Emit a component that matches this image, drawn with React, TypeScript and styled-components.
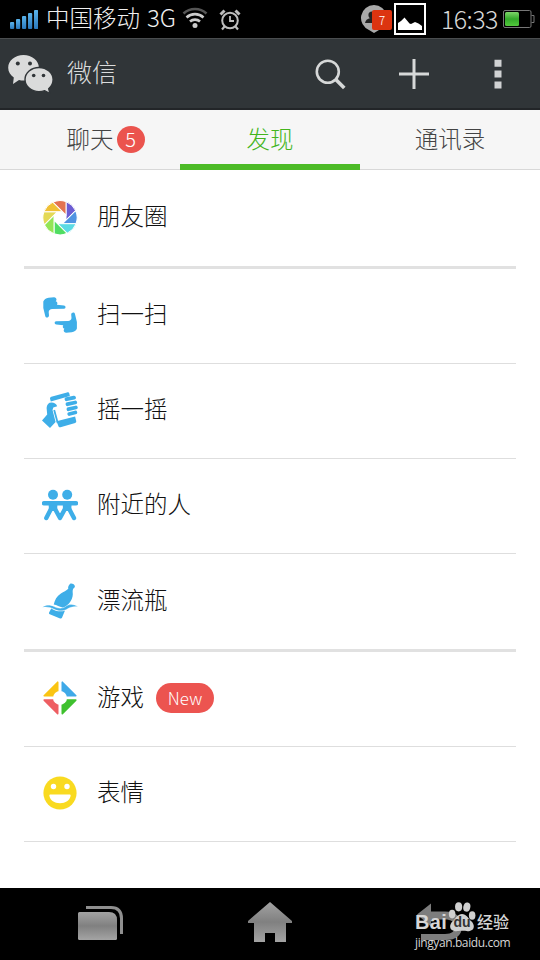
import type { ReactNode } from "react"
import styled, { createGlobalStyle } from "styled-components"

const BLUE = "#3eaee8"

export default function App() {
  return (
    <>
      <GlobalStyle />
      <Screen>
        <StatusBar />
        <Header />
        <Tabs />
        <List>
          <Item icon={<MomentsIcon />} label="朋友圈" thick height={96} />
          <Item icon={<ScanIcon />} label="扫一扫" />
          <Item icon={<ShakeIcon />} label="摇一摇" />
          <Item icon={<PeopleIcon />} label="附近的人" />
          <Item icon={<BottleIcon />} label="漂流瓶" thick height={95} />
          <Item icon={<GamesIcon />} label="游戏" tag="New" />
          <Item icon={<StickerIcon />} label="表情" />
        </List>
        <NavBar />
      </Screen>
    </>
  )
}

const StatusBar = () => (
  <Status>
    <svg width="28" height="19" viewBox="0 0 28 19">
      <defs>
        <linearGradient id="signal" x1="0" y1="0" x2="0" y2="1">
          <stop offset="0" stopColor="#5ab4ec" />
          <stop offset="1" stopColor="#2a78bc" />
        </linearGradient>
      </defs>
      {[0, 1, 2, 3, 4].map((i) => (
        <rect
          key={i}
          x={i * 6}
          y={12 - i * 3}
          width="4.2"
          height={7 + i * 3}
          rx="1"
          fill="url(#signal)"
        />
      ))}
    </svg>
    <Carrier>中国移动</Carrier>
    <Network>3G</Network>
    <WifiIcon />
    <AlarmIcon />
    <Spacer />
    <Notice>
      <svg width="28" height="30" viewBox="0 0 28 30">
        <path
          d="M14 1a13 13 0 0 1 5 25l-5 3-5-3A13 13 0 0 1 14 1z"
          fill="#a9a9a9"
        />
        <circle cx="12" cy="11" r="3.600" fill="#222" />
        <path d="M5 19c.8-3.600 3.500-5 7-5s6 1 7 5z" fill="#222" />
      </svg>
      <NoticeCount>7</NoticeCount>
    </Notice>
    <Picture width="32" height="32" viewBox="0 0 32 32">
      <rect x="1" y="1" width="30" height="30" stroke="#fff" strokeWidth="2" />
      <path
        d="M4 27v-7l3-2 3.500-3.500 5 6 1.500.5 4-2 3.500 1.500L28 23v4z"
        fill="#fff"
      />
    </Picture>
    <Clock>16:33</Clock>
    <svg width="32" height="18" viewBox="0 0 32 18">
      <defs>
        <linearGradient id="charge" x1="0" y1="0" x2="0" y2="1">
          <stop offset="0" stopColor="#7ed66a" />
          <stop offset=".5" stopColor="#33a92a" />
          <stop offset="1" stopColor="#52c83c" />
        </linearGradient>
      </defs>
      <rect
        x=".5"
        y=".5"
        width="27.500"
        height="17"
        rx="1.500"
        fill="none"
        stroke="#777"
      />
      <path d="M28.500 5.500h2.500v7h-2.500" fill="none" stroke="#777" />
      <rect x="2" y="2" width="14" height="14" rx="1.500" fill="url(#charge)" />
    </svg>
  </Status>
)

const WifiIcon = () => (
  <Wifi width="26" height="22" viewBox="0 0 26 22" fill="none" strokeWidth="2.600">
    <path d="M1.500 6.500a17 17 0 0 1 23 0" stroke="#555" />
    <path d="M4.500 10.500a12.500 12.500 0 0 1 17 0" stroke="#ccc" />
    <path d="M8 14.500a7.500 7.500 0 0 1 10 0" stroke="#ccc" />
    <circle cx="13" cy="18.500" r="2.500" fill="#ccc" />
  </Wifi>
)

const AlarmIcon = () => (
  <Alarm width="22" height="22" viewBox="0 0 22 22" fill="none" stroke="#bdbdbd">
    <circle cx="11" cy="11.500" r="7.800" strokeWidth="2" />
    <path d="M11 7v5h4" strokeWidth="1.800" />
    <path d="M1.500 5.500l4-4M20.500 5.500l-4-4" strokeWidth="3" />
    <path d="M5.500 17.500l-2.500 3M16.500 17.500l2.500 3" strokeWidth="2.200" />
  </Alarm>
)

const Header = () => (
  <Bar>
    <svg width="46" height="40" viewBox="0 0 46 40" fill="#dadbdb">
      <path d="M15.500 1C7 1 .2 6.600.2 13.700c0 4 2.200 7.500 5.600 9.800L5 30l6-4c1.500.4 3 .6 4.500.6 8.500 0 15.400-5.800 15.400-12.900S24 1 15.500 1z" />
      <path
        d="M31 13.500c-7.800 0-14 5.400-14 12s6.200 12.200 14 12.200c2 0 4-.3 5.700-1l5.300 3-1.300-5c2.700-2.200 4.400-5.400 4.400-9.200 0-6.600-6.300-12-14.100-12z"
        stroke="#303538"
        strokeWidth="1.400"
      />
      <g fill="#303538">
        <circle cx="9.800" cy="9.500" r="2" />
        <circle cx="22" cy="9.500" r="2" />
        <circle cx="25.700" cy="21.500" r="1.800" />
        <circle cx="35.500" cy="21.500" r="1.800" />
      </g>
    </svg>
    <Title>微信</Title>
    <Spacer />
    <Actions>
      <svg width="32" height="32" viewBox="0 0 32 32" fill="none" stroke="#d6d8d8">
        <circle cx="13.800" cy="13.700" r="11" strokeWidth="2.600" />
        <path d="M21.800 21.500l8.500 8.500" strokeWidth="3.600" />
      </svg>
      <svg width="32" height="32" viewBox="0 0 32 32" stroke="#d6d8d8" strokeWidth="3">
        <path d="M1 16h30M16 1v30" />
      </svg>
      <svg width="8" height="30" viewBox="0 0 8 30" fill="#d0d2d3">
        <path d="M.5.700h7v7h-7zM.5 11.500h7v7h-7zM.5 22.400h7v7h-7z" />
      </svg>
    </Actions>
  </Bar>
)

const Tabs = () => (
  <TabRow>
    <Tab>
      <TabLabel>
        聊天
        <TabBadge>5</TabBadge>
      </TabLabel>
    </Tab>
    <Tab $active>
      <TabLabel>发现</TabLabel>
    </Tab>
    <Tab>
      <TabLabel>通讯录</TabLabel>
    </Tab>
  </TabRow>
)

type ItemProps = {
  icon: ReactNode
  label: string
  tag?: string
  thick?: boolean
  height?: number
}

const Item = ({ icon, label, tag, thick, height = 94 }: ItemProps) => (
  <Row $thick={thick} $height={height}>
    {icon}
    <Label>{label}</Label>
    {tag && <Tag>{tag}</Tag>}
  </Row>
)

const BLADES = [
  "#6c5cd2",
  "#4f93e2",
  "#5cdbe4",
  "#50dd62",
  "#93e556",
  "#e4d955",
  "#f0c035",
  "#e37350",
]

const MomentsIcon = () => (
  <Icon viewBox="-18 -18.700 36 36">
    {BLADES.map((color, i) => (
      <path
        key={color}
        d="M6 2.500V-16.100A17.200 17.200 0 0 1 15.600 -7.100z"
        transform={`rotate(${i * 45})`}
        fill={color}
        stroke="#fff"
        strokeWidth="1"
      />
    ))}
  </Icon>
)

const HAND =
  "M1.300 4.500C2 2.500 4 1 6.500.7L12 .3c1.500.2 2.500 1 2.500 2.200 0 .8-.3 1.300-.8 1.700 1 .3 1.700.9 1.700 2 0 .6-.2 1-.5 1.500l7 .8c2 .2 2.200 3 .2 3.200l-12 .2c-2 .3-3.300 1.300-3.400 3l.3 3.600c.1 2.200-3.200 3-3.700.8L1.300 11z"

const ScanIcon = () => (
  <Icon viewBox="0 0 36 36" fill={BLUE}>
    <path d={HAND} />
    <path d={HAND} transform="rotate(180 18.100 18)" />
  </Icon>
)

const ShakeIcon = () => (
  <Icon viewBox="0 0 36 36" fill={BLUE}>
    <path d="M8 6.600c0-1 .5-1.500 1.300-1.800L25 .4c1.300-.3 2 .2 2.300 1.200l.6 2.400L8.800 9.600z" />
    <path d="M14.500 29.200l18.600-4.700 1.100 4.600c.2 1-.2 1.600-1 1.900L18.500 35.300c-1 .2-1.700 0-2-1z" />
    <path
      d="M24.500 7.200l7.500-1.500M25.500 12.200l7.700-1.700M26.500 17.200l7.300-1.700M27.300 22l6-1.500"
      stroke={BLUE}
      strokeWidth="3.800"
      strokeLinecap="round"
    />
    <path d="M12.200 18l3.500 13" stroke={BLUE} strokeWidth="1.800" />
    <path d="M4.600 16c.2-3.500 2-5.500 5-5.500 2.700 0 4.600 1.200 5.600 3.700l-3.900 1.400-.8 2.400 3.100 12-5.600 6L0 28.600l5.200-6z" />
  </Icon>
)

const PeopleIcon = () => (
  <Icon viewBox="0 0 36 36" fill={BLUE}>
    <circle cx="11" cy="7.700" r="5" />
    <circle cx="25.200" cy="7.700" r="5" />
    <path d="M6.500 15h9l-.4 9H7zM20.700 15h9l-.5 9H21z" />
    <path
      d="M2 16.300h32M9.500 21L4.300 31M12.500 21l5.500 10 5.500-10M26.700 21l5.300 10"
      stroke={BLUE}
      strokeWidth="4.400"
      strokeLinecap="round"
      strokeLinejoin="round"
      fill="none"
    />
  </Icon>
)

const BottleIcon = () => (
  <Icon viewBox="0 0 36 36" fill={BLUE}>
    <path d="M28 1c1.300-1.200 5.200.6 4.900 2.600-.1 1-1 1.800-1.800 2.300-.7 1.500-.4 3-.3 5 .1 3-1.300 6.500-3.800 9.700-2 1.500-3.600 4-6.500 3.800-3.300-.2-5.500-2.500-8.800-2.800 1-4.600 3-8.600 7.200-11.200 2.700-1.700 5.500-2.700 7.400-4.700-.6-1.700.4-3.500 1.700-4.700z" />
    <path
      d="M.5 24.200c3.600-2.800 8-2.400 11.500-.6 4.200 2.200 8.300 2.400 11.500 0 3.600-2.800 8-2.600 12.500.1-4-.6-8 .4-11.200 2.500-4.500 2.600-9.300 1.800-13-.2-3.400-1.800-7-2.600-11.300-1.800z"
      stroke="#fff"
      strokeWidth=".3"
    />
    <path d="M9.200 25.500c4.500 2.800 9 3.600 13.700 2.200l-2.800 6.800c-.4.900-1 1.200-2 .9L7.800 31.300c-.8-.4-1-1-.7-1.800z" />
  </Icon>
)

const GamesIcon = () => (
  <Icon viewBox="0 0 36 36" strokeWidth="1.600" strokeLinejoin="round">
    <path d="M15.700 2.200V15.700H2.200z" fill="#fac413" stroke="#fac413" />
    <path d="M20.300 2.200V15.700H33.800z" fill="#3fa9e8" stroke="#3fa9e8" />
    <path d="M15.700 33.600V20.100H2.200z" fill="#ee5e62" stroke="#ee5e62" />
    <path d="M20.300 33.600V20.100H33.800z" fill="#3fc02e" stroke="#3fc02e" />
    <circle cx="18" cy="17.900" r="7" fill="#fff" />
  </Icon>
)

const StickerIcon = () => (
  <Icon viewBox="0 0 36 36">
    <circle cx="18" cy="18" r="16.600" fill="#f9da20" />
    <circle cx="11.500" cy="11.500" r="2.700" fill="#fff" />
    <circle cx="25" cy="11.500" r="2.700" fill="#fff" />
    <path
      d="M8.500 19.500h19c1 0 1.300.6 1.100 1.500-.9 4.300-5 7.200-10.600 7.200S8.300 25.300 7.400 21c-.2-.9.1-1.500 1.100-1.500z"
      fill="#fff"
    />
  </Icon>
)

const NavBar = () => (
  <Nav>
    <svg width="45" height="36" viewBox="0 0 45 36">
      <defs>
        <linearGradient id="metal" x1="0" y1="0" x2="0" y2="1">
          <stop offset="0" stopColor="#a2a2a2" />
          <stop offset=".5" stopColor="#808080" />
          <stop offset="1" stopColor="#a4a4a4" />
        </linearGradient>
      </defs>
      <path
        d="M0 9.500Q0 8 1.500 8H31q8 0 8 8v18.500q0 1.500-1.500 1.500h-36Q0 36 0 34.500z"
        fill="url(#metal)"
      />
      <path
        d="M8 3.500h25q10.500 0 10.500 11V30"
        fill="none"
        stroke="#8f8f8f"
        strokeWidth="3"
      />
    </svg>
    <svg width="44" height="40" viewBox="0 0 44 40">
      <path d="M22 0l22 19v2h-6v19H27v-9H17v9H6V21H0v-2z" fill="url(#metal)" />
    </svg>
    <svg width="45" height="40" viewBox="0 0 45 40">
      <path
        d="M0 12.500L14 1.500v8h14c10 0 17 5 17 14.500s-6 14-16 14H4v-6h24c7 0 10-3 10-7.500s-4-7-10-7H14v7z"
        fill="#7d7d7d"
      />
    </svg>
    <Watermark>
      <Brand>
        <Latin>Bai</Latin>
        <Paw>
          <svg width="28" height="30" viewBox="0 0 28 31" fill="#cfcfcf">
            <ellipse cx="3.800" cy="12.500" rx="3.400" ry="4.500" />
            <ellipse cx="10.500" cy="5" rx="3.700" ry="4.700" />
            <ellipse cx="19" cy="5.200" rx="3.600" ry="4.800" transform="rotate(12 19 5.200)" />
            <ellipse cx="24.500" cy="14" rx="3.400" ry="4.400" />
            <path d="M14 12.500c4.500 0 6 4 9 7 4.500 3.500 4.500 9.500-1 10.500-3 .6-4-.2-8-.2s-5 .8-8 .2c-5.500-1-5.500-7-1-10.500 3-3 4.500-7 9-7z" />
          </svg>
          <PawText>du</PawText>
        </Paw>
        <Han>经验</Han>
      </Brand>
      <Url>jingyan.baidu.com</Url>
    </Watermark>
  </Nav>
)

const GlobalStyle = createGlobalStyle`
  * {
    box-sizing: border-box;
  }

  body {
    margin: 0;
    background: #fff;
    font-family: "Noto Sans CJK SC", "Noto Sans", sans-serif;
    font-weight: 300;
  }

  svg {
    display: block;
    flex-shrink: 0;
  }
`

const Screen = styled.div`
  display: flex;
  flex-direction: column;
  width: 540px;
  height: 960px;
  overflow: hidden;
`

const Spacer = styled.div`
  flex: 1;
`

const Status = styled.div`
  display: flex;
  align-items: center;
  height: 38px;
  padding: 0 5px 0 10px;
  background: #000;
  color: #f0f0f0;
`

const Carrier = styled.span`
  width: 94px;
  margin: -4px 0 0 8px;
  font-size: 23.5px;
  line-height: 34px;
  white-space: nowrap;
`

const Network = styled.span`
  width: 30px;
  margin: -4px 0 0 7px;
  font-size: 24px;
  line-height: 34px;
  letter-spacing: -0.2px;
`

const Wifi = styled.svg`
  margin: 0 0 2px 5px;
`

const Alarm = styled.svg`
  margin: 1px 0 0 11px;
`

const Notice = styled.div`
  position: relative;
  width: 34px;
`

const NoticeCount = styled.span`
  position: absolute;
  top: 6px;
  left: 12px;
  width: 20px;
  height: 20px;
  border-radius: 2px;
  background: #dc3410;
  color: #fff;
  font-size: 12px;
  line-height: 20px;
  text-align: center;
`

const Picture = styled.svg`
  fill: none;
`

const Clock = styled.span`
  width: 62px;
  margin: -3px 0 0 15px;
  color: #d8d8d8;
  font-size: 25px;
  line-height: 34px;
  letter-spacing: -0.6px;
`

const Bar = styled.div`
  display: flex;
  align-items: center;
  height: 72px;
  padding: 0 38px 0 8px;
  border-top: 1px solid #4a4d4f;
  border-bottom: 2px solid #222528;
  background: #303538;
`

const Title = styled.span`
  margin: -5px 0 0 13px;
  color: #d9dbdb;
  font-size: 25px;
  line-height: 36px;
`

const Actions = styled.div`
  display: flex;
  align-items: center;
  width: 188px;

  svg:nth-child(2) {
    margin: 0 auto 0 52px;
  }
`

const TabRow = styled.div`
  display: flex;
  height: 60px;
  background: #f6f6f6;
  box-shadow: inset 0 -1px #d8d8d8;
`

const Tab = styled.div<{ $active?: boolean }>`
  display: flex;
  flex: 1;
  justify-content: center;
  padding-top: 10px;
  border-bottom: 6px solid ${({ $active }) => ($active ? "#4cbb27" : "transparent")};
  color: ${({ $active }) => ($active ? "#43b51d" : "#444")};
`

const TabLabel = styled.span`
  position: relative;
  height: 36px;
  font-size: 23.5px;
  line-height: 36px;
`

const TabBadge = styled.span`
  position: absolute;
  top: 6px;
  left: 50px;
  width: 28px;
  height: 27px;
  border-radius: 50%;
  background: #eb544e;
  color: #fff;
  font-size: 20px;
  line-height: 26px;
  text-align: center;
`

const List = styled.div`
  flex: 1;
  padding: 0 24px;
  background: #fff;
`

const Row = styled.div<{ $thick?: boolean; $height: number }>`
  display: flex;
  align-items: center;
  box-sizing: content-box;
  height: ${({ $height }) => $height - 2}px;
  padding: 0 0 2px 18px;
  border-bottom: ${({ $thick }) => ($thick ? "3px solid #e1e1e1" : "1px solid #dedede")};
`

const Icon = styled.svg`
  width: 36px;
  height: 36px;
`

const Label = styled.span`
  margin: -4px 0 0 19px;
  color: #111;
  font-size: 23.5px;
  line-height: 36px;
`

const Tag = styled.span`
  width: 58px;
  height: 30px;
  margin-left: 12px;
  border-radius: 15px;
  background: #ec5450;
  color: #fff;
  font-size: 17px;
  line-height: 29px;
  text-align: center;
`

const Nav = styled.div`
  position: relative;
  display: flex;
  align-items: center;
  justify-content: space-between;
  height: 72px;
  padding: 0 78px 4px;
  background: #000;
`

const Watermark = styled.div`
  position: absolute;
  top: 13px;
  left: 415px;
  color: #d6d6d6;
`

const Brand = styled.div`
  display: flex;
  align-items: flex-end;
  height: 31px;
`

const Latin = styled.span`
  width: 33px;
  font: bold 20px/20px "Liberation Sans", sans-serif;
  letter-spacing: 0.4px;
`

const Paw = styled.div`
  position: relative;
`

const PawText = styled.span`
  position: absolute;
  right: 0;
  bottom: 2px;
  left: 0;
  color: #333;
  font: bold 14px/15px "Liberation Sans", sans-serif;
  text-align: center;
`

const Han = styled.span`
  margin-left: 1px;
  font-size: 16px;
  font-weight: 500;
  line-height: 22px;
`

const Url = styled.div`
  margin-top: 2px;
  font: 12px/17px "Open Sans", sans-serif;
  letter-spacing: -0.4px;
`
